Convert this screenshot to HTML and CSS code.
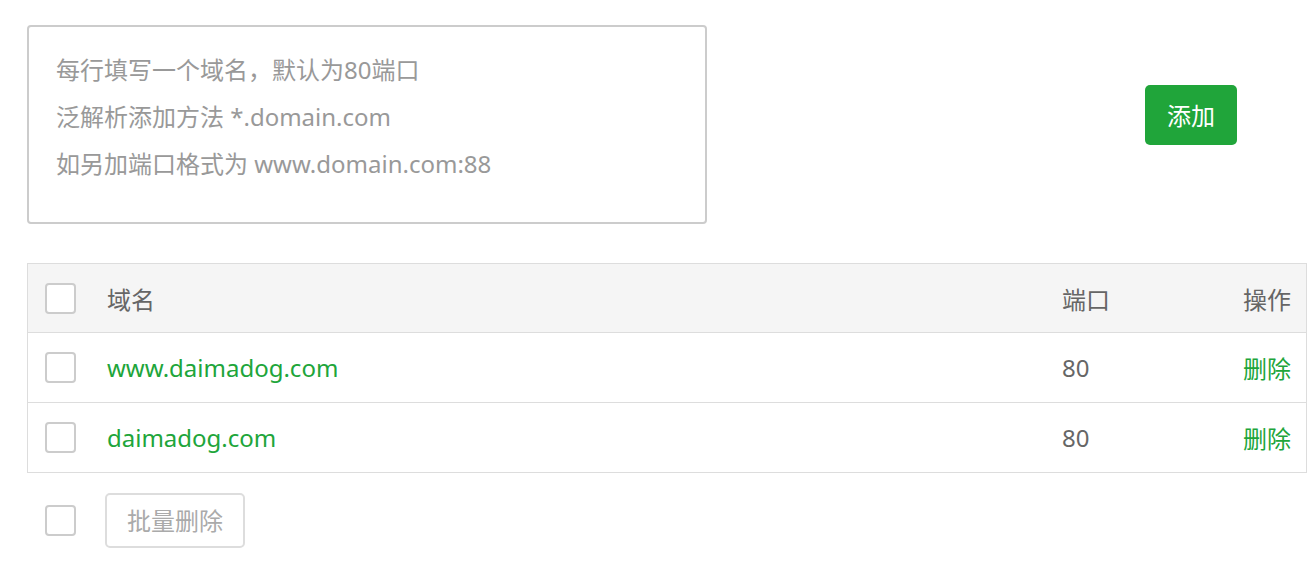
FILE: index.html
```html
<!DOCTYPE html>
<html lang="zh-CN">
<head>
    <meta charset="UTF-8">
    <meta name="viewport" content="width=device-width, initial-scale=1.0">
    <title>域名管理</title>
    <link rel="stylesheet" href="styles.css">
</head>
<body>
    <div class="panel">
        <div class="add-row">
            <textarea class="domain-input" placeholder="每行填写一个域名，默认为80端口&#10;泛解析添加方法 *.domain.com&#10;如另加端口格式为 www.domain.com:88"></textarea>
            <button class="btn-add" type="button">添加</button>
        </div>

        <table class="domain-table">
            <thead>
                <tr>
                    <th class="col-check"><input type="checkbox" class="check"></th>
                    <th>域名</th>
                    <th class="col-port">端口</th>
                    <th class="col-op">操作</th>
                </tr>
            </thead>
            <tbody>
                <tr>
                    <td class="col-check"><input type="checkbox" class="check"></td>
                    <td><a href="#">www.daimadog.com</a></td>
                    <td class="col-port">80</td>
                    <td class="col-op"><a href="#">删除</a></td>
                </tr>
                <tr>
                    <td class="col-check"><input type="checkbox" class="check"></td>
                    <td><a href="#">daimadog.com</a></td>
                    <td class="col-port">80</td>
                    <td class="col-op"><a href="#">删除</a></td>
                </tr>
            </tbody>
        </table>

        <div class="batch-row">
            <input type="checkbox" class="check">
            <button class="btn-batch" type="button">批量删除</button>
        </div>
    </div>
</body>
</html>
```

FILE: styles.css
```css
body {
    margin: 0;
    font-family: "Noto Sans", "Noto Sans CJK SC", sans-serif;
    font-size: 24px;
    color: #666;
    background: #fff;
}

.panel {
    padding: 25px 4px 0 27px;
}

.add-row {
    display: flex;
    align-items: flex-start;
}

.domain-input {
    width: 680px;
    height: 199px;
    box-sizing: border-box;
    padding: 19px 27px;
    border: 2px solid #ccc;
    border-radius: 4px;
    font-family: inherit;
    font-size: 24px;
    line-height: 47px;
    resize: none;
    outline: none;
}

.domain-input::placeholder {
    color: #999;
}

.btn-add {
    margin: 60px 0 0 438px;
    width: 92px;
    height: 60px;
    padding: 0 0 2px;
    background-color: #20a53a;
    color: white;
    border: none;
    border-radius: 5px;
    font-family: inherit;
    font-size: 24px;
    cursor: pointer;
}

.domain-table {
    margin-top: 39px;
    width: 1280px;
    border-collapse: collapse;
    border: 1px solid #ddd;
}

.domain-table th,
.domain-table td {
    height: 69px;
    padding: 0 15px;
    text-align: left;
    font-weight: normal;
    border-bottom: 1px solid #ddd;
}

.domain-table th {
    height: 68px;
}

.domain-table thead tr {
    background-color: #f5f5f5;
}

.domain-table .col-check {
    width: 31px;
    padding-left: 17px;
    padding-right: 16px;
}

.domain-table .col-port {
    width: 119px;
}

.domain-table .col-op {
    width: 80px;
    text-align: right;
}

.domain-table a {
    color: #20a53a;
    text-decoration: none;
}

.check {
    appearance: none;
    display: block;
    width: 31px;
    height: 31px;
    margin: 0;
    border: 2px solid #ccc;
    border-radius: 4px;
    background: #fff;
    cursor: pointer;
}

.batch-row {
    display: flex;
    align-items: center;
    gap: 29px;
    padding: 20px 0 0 18px;
}

.btn-batch {
    height: 55px;
    padding: 0 20px 2px;
    background: #fff;
    color: #aaa;
    border: 2px solid #ddd;
    border-radius: 5px;
    font-family: inherit;
    font-size: 24px;
}
```
